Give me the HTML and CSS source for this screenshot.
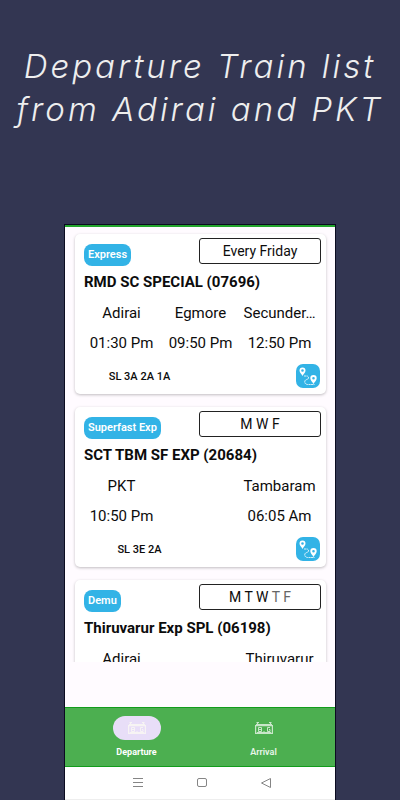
FILE: index.html
```
<!DOCTYPE html>
<html lang="en">
<head>
<meta charset="utf-8">
<meta name="viewport" content="width=device-width, initial-scale=1">
<title>Departure Train list</title>
<link rel="stylesheet" href="styles.css">
</head>
<body>
<svg class="defs" aria-hidden="true">
  <symbol id="route" viewBox="0 0 24 24">
    <path fill="#fff" fill-rule="evenodd" d="M6.500 3.500a3 3 0 0 1 3 3c0 2-2 3.500-3 5.500-1-2-3-3.500-3-5.500a3 3 0 0 1 3-3zm0 1.700a1.300 1.300 0 1 0 0 2.600 1.300 1.300 0 0 0 0-2.600zM17.500 11a3.200 3.200 0 0 1 3.200 3.200c0 2.200-2.200 3.800-3.200 5.800-1-2-3.200-3.600-3.200-5.800a3.200 3.200 0 0 1 3.200-3.200zm0 1.900a1.300 1.300 0 1 0 0 2.600 1.300 1.300 0 0 0 0-2.600z"/>
    <path fill="none" stroke="#fff" stroke-width=".8" stroke-dasharray="2 .4" d="M8 12h2.500c3 0 2.500 3.400 0 3.600-2.500.4-2.500 4.700 1 4.900h7"/>
  </symbol>
  <symbol id="train" viewBox="0 0 18 14">
    <path fill="none" stroke="currentColor" stroke-width="1.200" d="M.6 4.600h16.800v7.800H.6zM2.500 4.500V1M15.500 4.500V1M1.500 1.500h2.500M14 1.500h2.500M1 3.500h16"/>
    <path fill="none" stroke="currentColor" d="M3.500 6.500h3v4h-3zM3.500 8.500h3M15 6.500h-2.500v4H15v-2h-1M2 11.500h14M9 10v1"/>
  </symbol>
</svg>
<h1 class="headline">Departure Train list<br>from Adirai and PKT</h1>
<div class="phone">
  <main class="list">
    <article class="card">
      <header class="card-top"><span class="badge">Express</span><span class="days">Every Friday</span></header>
      <h2 class="name">RMD SC SPECIAL (07696)</h2>
      <div class="stops"><span>Adirai</span><span>Egmore</span><span>Secunder…</span><span>01:30 Pm</span><span>09:50 Pm</span><span>12:50 Pm</span></div>
      <footer class="card-end"><span class="classes">SL 3A 2A 1A</span><button class="route" aria-label="Route"><svg><use href="#route"/></svg></button></footer>
    </article>
    <article class="card">
      <header class="card-top"><span class="badge">Superfast Exp</span><span class="days">M W F</span></header>
      <h2 class="name">SCT TBM SF EXP (20684)</h2>
      <div class="stops"><span>PKT</span><span></span><span>Tambaram</span><span>10:50 Pm</span><span></span><span>06:05 Am</span></div>
      <footer class="card-end"><span class="classes">SL 3E 2A</span><button class="route" aria-label="Route"><svg><use href="#route"/></svg></button></footer>
    </article>
    <article class="card">
      <header class="card-top"><span class="badge">Demu</span><span class="days">M T W <span class="faded">T F</span></span></header>
      <h2 class="name">Thiruvarur Exp SPL (06198)</h2>
      <div class="stops"><span>Adirai</span><span></span><span>Thiruvarur</span></div>
    </article>
  </main>
  <nav class="tabs">
    <a class="tab active" href="#departure"><span class="pill"><svg><use href="#train"/></svg></span>Departure</a>
    <a class="tab" href="#arrival"><span class="pill"><svg><use href="#train"/></svg></span>Arrival</a>
  </nav>
  <div class="system">
    <button aria-label="Recent apps"><svg viewBox="0 0 12 12"><path d="M1 1.500h10M1 5.500h10M1 9.500h10"/></svg></button>
    <button aria-label="Home"><svg viewBox="0 0 12 12"><rect x="1.500" y="1.500" width="9" height="8" rx="1.500"/></svg></button>
    <button aria-label="Back"><svg viewBox="0 0 12 12"><path d="M10.500 1.500v9L1.500 6z"/></svg></button>
  </div>
</div>
</body>
</html>
```
FILE: styles.css
```
* { box-sizing: border-box; }
body {
  margin: 0;
  height: 100vh;
  display: flex;
  flex-direction: column;
  align-items: center;
  background: #333652;
  color: #0c0c0c;
  font-family: Roboto, sans-serif;
}
.defs { position: absolute; width: 0; height: 0; }
.headline {
  margin: 0;
  padding-top: 45px;
  height: 224px;
  flex: none;
  color: #eee;
  font: italic 300 33px/43px Inter, sans-serif;
  letter-spacing: 3px;
  text-align: center;
  white-space: nowrap;
}
.phone {
  flex: 1;
  min-height: 0;
  width: 68%;
  display: flex;
  flex-direction: column;
  background: #fffbff;
  border: solid #0b0b20;
  border-width: 1px 1px 0;
}
.list {
  flex: 1;
  min-height: 0;
  margin-bottom: 45px;
  padding: 7px 9px 0 10px;
  display: flex;
  flex-direction: column;
  gap: 13px;
  overflow: hidden;
  border-top: 2px solid #22a52c;
}
.card {
  flex: none;
  padding-bottom: 6px;
  background: #fff;
  border-radius: 5px;
  box-shadow: 0 1px 3px rgba(0, 0, 0, .25);
}
.card-top {
  display: flex;
  align-items: flex-end;
  justify-content: space-between;
  padding: 4px 5px 0 9px;
}
.badge {
  margin-top: 6px;
  padding: 0 4px;
  border-radius: 8px;
  background: #32b3e6;
  color: #fff;
  font-size: 11px;
  font-weight: 600;
  line-height: 22px;
}
.days {
  align-self: flex-start;
  width: 122px;
  border: 1px solid #222;
  border-radius: 3px;
  font-size: 14px;
  line-height: 24px;
  text-align: center;
}
.faded { color: #666; }
.name {
  margin: 6px 9px;
  font-size: 15px;
  font-weight: 700;
  line-height: 20px;
  white-space: nowrap;
}
.stops {
  display: grid;
  grid-template-columns: repeat(3, 1fr);
  padding: 0 7px;
  font-size: 15px;
  line-height: 30px;
  text-align: center;
  white-space: nowrap;
}
.stops span { min-height: 30px; }
.card-end {
  display: flex;
  align-items: center;
  justify-content: space-between;
  padding: 6px 6px 0 9px;
}
.classes {
  width: 111px;
  font-size: 11px;
  font-weight: 500;
  text-align: center;
}
.route {
  width: 24px;
  height: 24px;
  padding: 0;
  border: 0;
  border-radius: 7px;
  background: #32b3e6;
}
.route svg { display: block; width: 24px; height: 24px; }
.tabs {
  display: flex;
  height: 60px;
  padding: 0 8px;
  background: #4caf50;
  border: solid #129c1c;
  border-width: 1px 0;
}
.tab {
  flex: 1;
  display: flex;
  flex-direction: column;
  align-items: center;
  gap: 6px;
  padding-top: 8px;
  color: #e8f5e9;
  font-size: 9px;
  font-weight: 600;
  line-height: 12px;
  text-decoration: none;
}
.active { color: #fff; font-weight: 700; }
.pill {
  display: grid;
  place-items: center;
  width: 48px;
  height: 24px;
  border-radius: 12px;
  color: #c8e6c9;
}
.active .pill { background: #e8def8; color: #f7f4f4; }
.pill svg { width: 18px; height: 14px; }
.system {
  display: flex;
  align-items: center;
  justify-content: center;
  gap: 52px;
  height: 33px;
  padding-left: 4px;
  background: #fff;
  border-bottom: 1px solid #eee;
}
.system button {
  width: 12px;
  height: 12px;
  padding: 0;
  border: 0;
  background: none;
}
.system svg {
  display: block;
  width: 12px;
  height: 12px;
  fill: none;
  stroke: #858585;
}
```
